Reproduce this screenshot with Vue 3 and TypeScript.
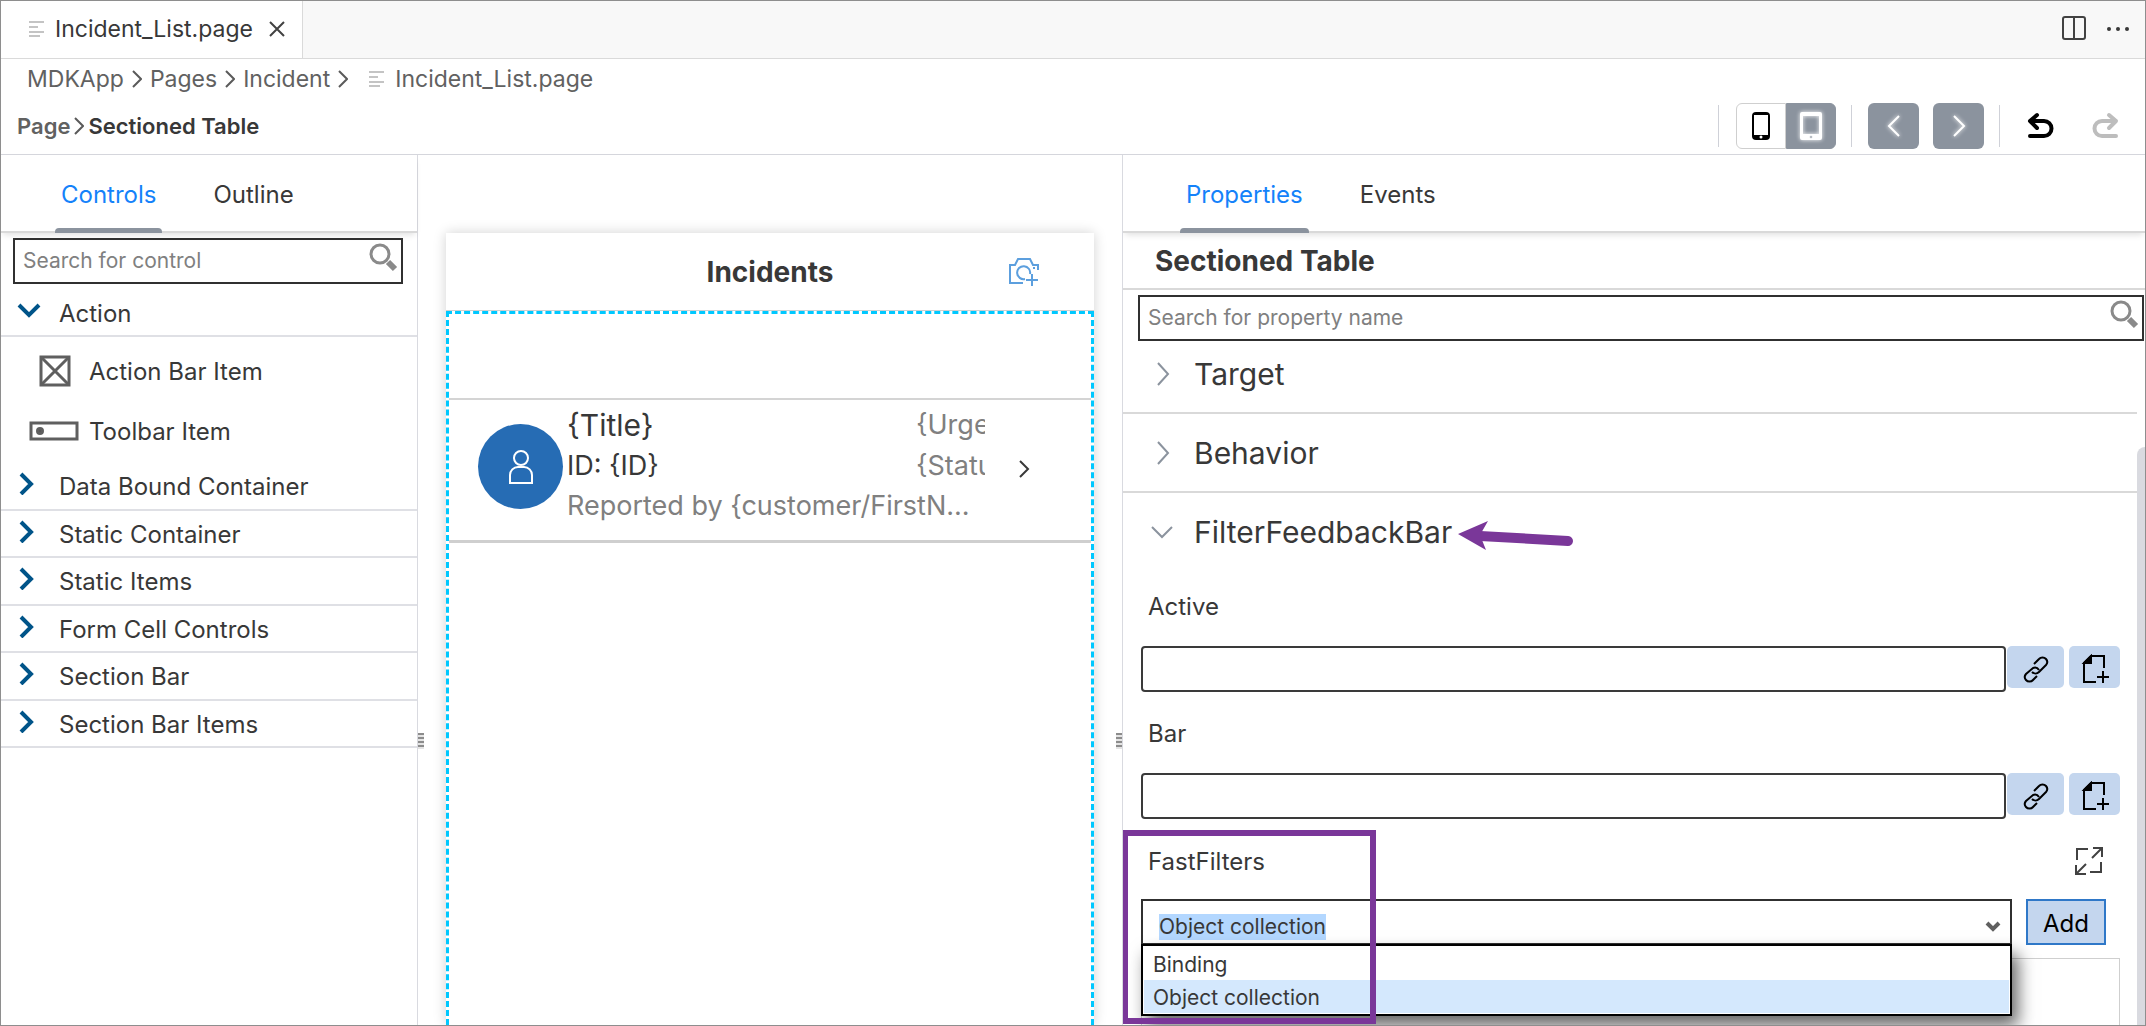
<script setup lang="ts">
import { ref } from 'vue'

interface Crumb {
  label: string
}

const crumbs: Crumb[] = [{ label: 'MDKApp' }, { label: 'Pages' }, { label: 'Incident' }]

const groups: string[] = [
  'Data Bound Container',
  'Static Container',
  'Static Items',
  'Form Cell Controls',
  'Section Bar',
  'Section Bar Items',
]

const sections: string[] = ['Target', 'Behavior']

const filterTypes: string[] = ['Binding', 'Object collection']
const filterType = ref<string>('Object collection')

const controlQuery = ref<string>('')
const propertyQuery = ref<string>('')

const bindings = ref([
  { id: 'active', label: 'Active', value: '' },
  { id: 'bar', label: 'Bar', value: '' },
])
</script>

<template>
  <div class="app">
    <header class="tabbar">
      <div class="file-tab">
        <svg class="file-icon" width="16" height="16" viewBox="0 0 16 16" aria-hidden="true">
          <path d="M0 1h15M0 6h9M0 11h15M0 15h11" />
        </svg>
        <span>Incident_List.page</span>
        <button class="plain" type="button" aria-label="Close">
          <svg width="18" height="18" viewBox="0 0 18 18" class="line dark">
            <path d="M2 2l14 14M16 2L2 16" />
          </svg>
        </button>
      </div>
      <div class="tabbar-actions">
        <button class="plain" type="button" aria-label="Split editor">
          <svg width="24" height="24" viewBox="0 0 24 24" class="line dark">
            <rect x="1" y="1" width="22" height="22" rx="2" />
            <path d="M12 1v22" />
          </svg>
        </button>
        <button class="plain" type="button" aria-label="More actions">
          <svg width="24" height="24" viewBox="0 0 24 24" class="dots">
            <circle cx="3" cy="13" r="2" />
            <circle cx="12" cy="13" r="2" />
            <circle cx="21" cy="13" r="2" />
          </svg>
        </button>
      </div>
    </header>

    <nav class="crumbs" aria-label="File path">
      <template v-for="c in crumbs" :key="c.label">
        <a href="#">{{ c.label }}</a>
        <svg class="crumb-sep" width="10" height="18" viewBox="0 0 10 18" aria-hidden="true">
          <path d="M1 1l8 8-8 8" />
        </svg>
      </template>
      <svg class="file-icon crumb-file" width="16" height="16" viewBox="0 0 16 16" aria-hidden="true">
        <path d="M0 1h15M0 6h9M0 11h15M0 15h11" />
      </svg>
      <a href="#">Incident_List.page</a>
    </nav>

    <div class="toolbar">
      <nav class="page-path" aria-label="Page path">
        <a href="#">Page</a>
        <svg class="crumb-sep" width="10" height="18" viewBox="0 0 10 18" aria-hidden="true">
          <path d="M1 1l8 8-8 8" />
        </svg>
        <strong>Sectioned Table</strong>
      </nav>
      <div class="tools">
        <i class="divider"></i>
        <div class="device">
          <button type="button" aria-label="Phone">
            <svg width="20" height="30" viewBox="0 0 20 30">
              <rect x="1" y="1" width="18" height="28" rx="4" fill="#000" />
              <rect x="3" y="4" width="14" height="20" fill="#fff" />
              <circle cx="10" cy="26" r="1.5" fill="#fff" />
            </svg>
          </button>
          <button type="button" aria-label="Tablet" class="on">
            <svg width="24" height="30" viewBox="0 0 24 30" class="glow">
              <path fill="#fff" fill-rule="evenodd" d="M3 1h18a2 2 0 0 1 2 2v24a2 2 0 0 1-2 2H3a2 2 0 0 1-2-2V3a2 2 0 0 1 2-2zM4 5v18h16V5z" />
              <circle cx="12" cy="26" r="1.3" fill="#b9bec5" />
            </svg>
          </button>
        </div>
        <i class="divider"></i>
        <button type="button" class="step" aria-label="Previous">
          <svg width="14" height="24" viewBox="0 0 14 24" class="glow"><path d="M12 2L2 12l10 10" /></svg>
        </button>
        <button type="button" class="step" aria-label="Next">
          <svg width="14" height="24" viewBox="0 0 14 24" class="glow"><path d="M2 2l10 10L2 22" /></svg>
        </button>
        <i class="divider"></i>
        <button type="button" class="plain history" aria-label="Undo">
          <svg width="28" height="28" viewBox="0 0 28 28">
            <path d="M11 3L4 9l7 7M4 9h14a7 7 0 0 1 0 15H4" />
          </svg>
        </button>
        <button type="button" class="plain history off" aria-label="Redo">
          <svg width="28" height="28" viewBox="0 0 28 28">
            <path d="M17 3l7 6-7 7M24 9H10a7 7 0 0 0 0 15h14" />
          </svg>
        </button>
      </div>
    </div>

    <main class="body">
      <aside class="left">
        <div class="tabs left-tabs" role="tablist">
          <button type="button" role="tab" class="tab active" aria-selected="true">Controls</button>
          <button type="button" role="tab" class="tab" aria-selected="false">Outline</button>
        </div>
        <div class="search">
          <input v-model="controlQuery" type="text" placeholder="Search for control" aria-label="Search for control" />
          <svg width="30" height="30" viewBox="0 0 30 30" aria-hidden="true">
            <circle cx="12" cy="12" r="9" fill="none" stroke="#8a8a8a" stroke-width="3" />
            <path d="M20 20l7 7" stroke="#8a8a8a" stroke-width="6" />
          </svg>
        </div>
        <button type="button" class="group open">
          <svg width="24" height="24" viewBox="0 0 24 24"><path d="M2 7l10 10L22 7" /></svg>
          <span>Action</span>
        </button>
        <ul class="items">
          <li>
            <span class="item-icon">
              <svg width="32" height="32" viewBox="0 0 32 32" class="shape">
                <rect x="2" y="2" width="28" height="28" />
                <path d="M3 3l26 26M29 3L3 29" />
              </svg>
            </span>
            <span>Action Bar Item</span>
          </li>
          <li>
            <span class="item-icon wide">
              <svg width="50" height="20" viewBox="0 0 50 20" class="shape">
                <rect x="2" y="2" width="46" height="16" />
                <circle cx="11" cy="10" r="2.5" fill="#555" />
              </svg>
            </span>
            <span>Toolbar Item</span>
          </li>
        </ul>
        <div class="groups">
          <button v-for="g in groups" :key="g" type="button" class="group">
            <svg width="24" height="24" viewBox="0 0 24 24"><path d="M4 3l10 10L4 23" /></svg>
            <span>{{ g }}</span>
          </button>
        </div>
        <i class="grip grip-left"></i>
      </aside>

      <section class="canvas">
        <div class="phone">
          <div class="phone-head">
            <h2>Incidents</h2>
            <button type="button" class="plain camera" aria-label="Add photo">
              <svg width="32" height="30" viewBox="0 0 32 30">
                <path d="M15 26H2V8h5l3-6h12l3 6h5v5M17 22a6.500 6.500 0 1 1 5-5M25 11h2M24 17v12M18 23h12" />
              </svg>
            </button>
          </div>
          <div class="selection">
            <div class="spacer"></div>
            <div class="record">
              <span class="avatar">
                <svg width="28" height="36" viewBox="0 0 28 36">
                  <circle cx="14" cy="9" r="7" />
                  <path d="M3 34V26a8 8 0 0 1 8-8h6a8 8 0 0 1 8 8v8z" />
                </svg>
              </span>
              <div class="record-main">
                <div class="title">{Title}</div>
                <div class="sub">ID: {ID}</div>
              </div>
              <div class="status">
                <div>{Urgency}</div>
                <div>{Status}</div>
              </div>
              <svg class="record-next" width="12" height="18" viewBox="0 0 12 18"><path d="M2 1l8 8-8 8" /></svg>
              <div class="foot">Reported by {customer/FirstN...</div>
            </div>
          </div>
        </div>
        <i class="grip grip-right"></i>
      </section>

      <aside class="right">
        <div class="tabs right-tabs" role="tablist">
          <button type="button" role="tab" class="tab active" aria-selected="true">Properties</button>
          <button type="button" role="tab" class="tab" aria-selected="false">Events</button>
        </div>
        <h1>Sectioned Table</h1>
        <div class="search">
          <input v-model="propertyQuery" type="text" placeholder="Search for property name" aria-label="Search for property name" />
          <svg width="30" height="30" viewBox="0 0 30 30" aria-hidden="true">
            <circle cx="12" cy="12" r="9" fill="none" stroke="#8a8a8a" stroke-width="3" />
            <path d="M20 20l7 7" stroke="#8a8a8a" stroke-width="6" />
          </svg>
        </div>

        <div class="scroll">
          <div class="props">
            <button v-for="s in sections" :key="s" type="button" class="section">
              <svg width="24" height="24" viewBox="0 0 24 24"><path d="M8 1l10 11L8 23" /></svg>
              <span>{{ s }}</span>
            </button>
            <button type="button" class="section expanded">
              <svg width="24" height="24" viewBox="0 0 24 24"><path d="M2 7l10 10L22 7" /></svg>
              <span>FilterFeedbackBar</span>
              <svg class="arrow" width="118" height="34" viewBox="0 0 118 34" aria-hidden="true">
                <path d="M22 17L110 22" stroke="#7a3799" stroke-width="10" stroke-linecap="round" />
                <path d="M0 15L30 2l-8 14 6 15z" fill="#7a3799" />
              </svg>
            </button>

            <div v-for="b in bindings" :key="b.id" class="field">
              <label :for="b.id">{{ b.label }}</label>
              <div class="field-row">
                <input :id="b.id" v-model="b.value" type="text" />
                <button type="button" class="chip link" :aria-label="'Link ' + b.label">
                  <svg width="28" height="28" viewBox="0 0 28 28">
                    <path d="M12 9l5-5a4.600 4.600 0 0 1 7 0a4.600 4.600 0 0 1 0 6l-7 7a5 5 0 0 1-7 0M15 21l-4 4a4.600 4.600 0 0 1-7 0a4.600 4.600 0 0 1 0-6l7-6a5 5 0 0 1 6 2" />
                  </svg>
                </button>
                <button type="button" class="chip" :aria-label="'Create rule for ' + b.label">
                  <svg width="30" height="30" viewBox="0 0 30 30">
                    <path d="M16 28H4V9l7-7h13v12M23 17v12M17 23h12" />
                    <path d="M4 9l7-7v7z" fill="#000" />
                  </svg>
                </button>
              </div>
            </div>

            <div class="field fast">
              <div class="fast-head">
                <label for="fast">FastFilters</label>
                <button type="button" class="plain expand" aria-label="Expand">
                  <svg width="30" height="30" viewBox="0 0 30 30" class="line dark">
                    <path d="M3 14V3h11M27 16v10H16M19 2h9v9M28 2L18 12M2 19v9h10M2 28l10-10" />
                  </svg>
                </button>
              </div>
              <div class="fast-row">
                <div class="combo">
                  <select id="fast" v-model="filterType">
                    <option v-for="t in filterTypes" :key="t">{{ t }}</option>
                  </select>
                  <svg width="16" height="12" viewBox="0 0 16 12"><path d="M2 2l6 6 6-6" /></svg>
                  <ul class="menu" role="listbox" aria-label="FastFilters">
                    <li
                      v-for="t in filterTypes"
                      :key="t"
                      role="option"
                      :aria-selected="t === filterType"
                      :class="{ picked: t === filterType }"
                    >
                      {{ t }}
                    </li>
                  </ul>
                </div>
                <button type="button" class="add">Add</button>
              </div>
              <div class="collection"></div>
              <i class="mark"></i>
            </div>
          </div>
          <i class="thumb"></i>
        </div>
      </aside>
    </main>
  </div>
</template>

<style>
body {
  margin: 0;
  background: #fff;
}
</style>

<style scoped>
* {
  box-sizing: border-box;
}

.app {
  height: 100vh;
  display: flex;
  flex-direction: column;
  border: 1px solid #8e8e8e;
  overflow: hidden;
  background: #fff;
  color: #383838;
  font-family: Inter, "Liberation Sans", sans-serif;
  font-size: 24px;
}

button,
input,
select {
  font: inherit;
  color: inherit;
}

button {
  margin: 0;
  cursor: pointer;
}

a {
  color: inherit;
  text-decoration: none;
}

svg {
  display: block;
  flex: none;
  fill: none;
}

ul {
  list-style: none;
  margin: 0;
  padding: 0;
}

.plain {
  display: flex;
  padding: 0;
  border: 0;
  background: none;
}

.line {
  stroke-width: 2;
}

.dark {
  stroke: #424242;
}

/* File tab strip */
.tabbar {
  flex: none;
  display: flex;
  justify-content: space-between;
  height: 58px;
  background: #f8f8f8;
  border-bottom: 1px solid #dadada;
}

.file-tab {
  display: flex;
  align-items: center;
  height: 57px;
  padding: 0 16px 2px 28px;
  background: #fff;
  border-right: 1px solid #dadada;
  font-size: 23px;
}

.file-tab span {
  margin: 0 15px 0 10px;
}

.file-icon {
  stroke: #c4c4c4;
  stroke-width: 2;
}

.tabbar-actions {
  display: flex;
  align-items: center;
  gap: 20px;
  padding: 0 15px 4px 0;
}

.dots {
  fill: #383838;
}

/* Paths */
.crumbs {
  flex: none;
  display: flex;
  align-items: center;
  height: 40px;
  padding-left: 26px;
  font-size: 23px;
  color: #616161;
}

.crumb-sep {
  margin: 0 8px;
  stroke: #5a5a5a;
  stroke-width: 2;
}

.crumb-file {
  margin: 0 10px 0 13px;
}

.toolbar {
  flex: none;
  display: flex;
  justify-content: space-between;
  align-items: center;
  height: 56px;
  padding: 0 25px 1px 16px;
  border-bottom: 1px solid #d5d6dc;
}

.page-path {
  display: flex;
  align-items: center;
  font-size: 22px;
  font-weight: 600;
}

.page-path a {
  color: #616161;
}

.page-path strong {
  font-weight: 600;
}

.page-path .crumb-sep {
  margin: 0 4px;
}

.tools {
  display: flex;
  align-items: center;
}

.divider {
  width: 1px;
  height: 42px;
  background: #cfd1d8;
}

.device {
  display: flex;
  margin: 0 15px 0 17px;
}

.device button {
  display: flex;
  align-items: center;
  justify-content: center;
  width: 50px;
  height: 46px;
  padding: 0;
  border: 1px solid #cfcfcf;
  border-radius: 6px 0 0 6px;
  background: #fff;
}

.device .on {
  border-color: #8b939e;
  border-radius: 0 6px 6px 0;
  background: #8b939e;
}

.glow {
  filter: drop-shadow(0 0 2px #fff);
}

.step {
  display: flex;
  align-items: center;
  justify-content: center;
  width: 51px;
  height: 46px;
  padding: 0;
  margin-left: 14px;
  border: 0;
  border-radius: 6px;
  background: #8b939e;
}

.divider + .step {
  margin-left: 16px;
}

.step + .divider {
  margin-left: 15px;
}

.step svg {
  stroke: #fff;
  stroke-width: 2;
}

.history {
  margin-left: 26px;
  stroke: #000;
  stroke-width: 4;
  stroke-linecap: round;
  stroke-linejoin: round;
}

.history + .history {
  margin-left: 38px;
}

.off {
  stroke: #bdbdbd;
}

/* Three-column body */
.body {
  flex: 1;
  min-height: 0;
  display: grid;
  grid-template-columns: minmax(0, 417fr) minmax(0, 704fr) minmax(0, 1023fr);
}

.left,
.canvas,
.right {
  position: relative;
  display: flex;
  flex-direction: column;
  min-height: 0;
}

.left {
  z-index: 1;
  border-right: 1px solid #d9dae0;
}

.right {
  border-left: 1px solid #d9dae0;
  overflow: hidden;
}

.tabs {
  flex: none;
  display: flex;
  height: 78px;
  border-bottom: 2px solid #d9d9d9;
  box-shadow: 0 4px 6px -2px rgba(0, 0, 0, 0.12);
}

.left-tabs {
  padding-left: 54px;
  gap: 45px;
}

.right-tabs {
  padding-left: 57px;
  gap: 45px;
}

.tab {
  position: relative;
  padding: 2px 6px 0;
  border: 0;
  background: none;
}

.active {
  color: #1482fa;
}

.active::after {
  content: "";
  position: absolute;
  left: 0;
  right: 0;
  bottom: -2px;
  height: 5px;
  border-radius: 4px 4px 0 0;
  background: #8b939e;
}

.search {
  flex: none;
  display: flex;
  height: 46px;
  padding: 2px 3px 0 8px;
  border: 2px solid #303030;
  font-size: 21px;
}

.left .search {
  margin: 5px 14px 0 12px;
}

.right .search {
  margin: 5px 1px 0 15px;
}

.search input {
  flex: 1;
  min-width: 0;
  height: 36px;
  padding: 0;
  border: 0;
  outline: 0;
  background: none;
}

.search input::placeholder {
  color: #808080;
  opacity: 1;
}

.group {
  display: flex;
  align-items: center;
  width: 100%;
  padding: 2px 0 0 16px;
  border: 0;
  border-bottom: 2px solid #dfe0e5;
  background: none;
  text-align: left;
}

.group svg {
  margin: 0 18px 7px 0;
  stroke: #005489;
  stroke-width: 4;
}

.open {
  flex: none;
  height: 53px;
  padding-top: 7px;
}

.items li {
  display: flex;
  align-items: center;
  height: 61px;
  padding: 7px 0 0 28px;
}

.items li + li {
  height: 65px;
  padding-top: 1px;
}

.item-icon {
  width: 60px;
  padding-left: 10px;
}

.wide {
  padding-left: 0;
}

.shape {
  stroke: #5f5f5f;
  stroke-width: 3;
}

.groups {
  display: flex;
  flex-direction: column;
  height: 285px;
}

.groups .group {
  flex: 1;
}

.grip {
  position: absolute;
  top: 578px;
  width: 6px;
  height: 16px;
  background: repeating-linear-gradient(#8c8c8c 0 2px, #e4e4e4 2px 4px);
}

.grip-left {
  right: -7px;
}

.grip-right {
  right: 0;
}

/* Phone preview */
.canvas {
  overflow: hidden;
  padding: 78px 28px 0 28px;
}

.phone {
  flex: 1;
  display: flex;
  flex-direction: column;
  box-shadow: 0 0 12px rgba(0, 0, 0, 0.18);
}

.phone-head {
  position: relative;
  display: flex;
  align-items: center;
  justify-content: center;
  height: 78px;
  border-bottom: 1px solid #cfcfcf;
}

h2 {
  margin: 0;
  font-size: 28px;
  font-weight: 700;
}

.camera {
  position: absolute;
  right: 54px;
  stroke: #5c9fde;
  stroke-width: 2;
}

.selection {
  flex: 1;
  border: 3px dashed #00c8ff;
  border-bottom: 0;
}

.spacer {
  height: 86px;
  border-bottom: 2px solid #d4d4d4;
}

.record {
  display: grid;
  grid-template-columns: 89px 1fr 69px 34px 72px;
  grid-template-rows: 89px 50px;
  height: 143px;
  padding-left: 29px;
  border-bottom: 3px solid #cfcfcf;
  font-size: 27px;
}

.avatar {
  grid-row: 1 / 3;
  align-self: center;
  display: flex;
  align-items: center;
  justify-content: center;
  width: 85px;
  height: 85px;
  margin-top: -6px;
  border-radius: 50%;
  background: #266cb4;
}

.avatar svg {
  stroke: #fff;
  stroke-width: 2;
}

.record-main,
.status {
  padding-top: 5px;
}

.record-main div,
.status div {
  height: 41px;
  line-height: 40px;
}

.record-main .title {
  font-size: 30px;
}

.status {
  overflow: hidden;
  color: #808080;
}

.record-next {
  align-self: end;
  margin: 0 0 11px 33px;
  stroke: #383838;
  stroke-width: 2;
}

.foot {
  grid-column: 2 / 6;
  color: #808080;
  line-height: 33px;
}

/* Property editor */
h1 {
  flex: none;
  margin: 0;
  height: 57px;
  padding-left: 32px;
  border-bottom: 2px solid #d9d9d9;
  font-size: 28px;
  font-weight: 700;
  line-height: 56px;
}

.scroll {
  flex: 1;
  min-height: 0;
  display: flex;
}

.props {
  flex: 1;
  min-width: 0;
}

.thumb {
  width: 8px;
  margin-top: 106px;
  border-radius: 8px 0 0 0;
  background: #d9dae0;
}

.section {
  display: flex;
  align-items: center;
  width: 100%;
  height: 79px;
  padding: 0 0 0 27px;
  border: 0;
  border-bottom: 2px solid #d9d9d9;
  background: none;
  font-size: 30px;
  text-align: left;
}

.section:first-child {
  height: 73px;
  padding-bottom: 5px;
}

.section > svg:first-child {
  margin-right: 20px;
  stroke: #8b939e;
  stroke-width: 2;
}

.expanded {
  height: 72px;
  padding-top: 6px;
  border-bottom: 0;
}

.arrow {
  margin: 8px 0 0 6px;
}

.field {
  padding: 0 17px 0 18px;
}

.field > label,
.fast-head {
  display: flex;
  align-items: center;
  height: 81px;
  padding: 2px 0 0 7px;
}

.field-row {
  display: flex;
}

.field-row input {
  flex: 1;
  min-width: 0;
  height: 46px;
  padding: 0 8px;
  border: 2px solid #3a3a3a;
  border-radius: 4px;
  background: #fff;
}

.chip {
  display: flex;
  align-items: center;
  justify-content: center;
  width: 51px;
  height: 42px;
  padding: 3px 0 0;
  border: 0;
  border-radius: 5px;
  background: #c4d6ee;
}

.chip svg {
  stroke: #000;
  stroke-width: 2;
}

.link {
  width: 57px;
  margin: 0 5px 0 1px;
}

.fast {
  position: relative;
}

.fast-head {
  justify-content: space-between;
  height: 80px;
  padding: 4px 16px 0 7px;
}

.fast-row {
  display: flex;
  align-items: center;
  gap: 14px;
  padding-right: 14px;
}

.combo {
  position: relative;
  flex: 1;
  display: flex;
  align-items: center;
  justify-content: space-between;
  height: 46px;
  padding: 9px 9px 0 16px;
  border: 2px solid #303030;
  font-size: 21px;
}

.combo select {
  height: 26px;
  padding: 0;
  border: 0;
  border-radius: 0;
  appearance: none;
  background: #b3d7ff;
  line-height: 26px;
}

.combo > svg {
  stroke: #606060;
  stroke-width: 4;
}

.menu {
  position: absolute;
  z-index: 1;
  top: 43px;
  left: -2px;
  right: -2px;
  padding: 1px;
  border: 2px solid #000;
  background: #fff;
  box-shadow: 6px 10px 16px rgba(0, 0, 0, 0.6);
}

.menu li {
  height: 33px;
  padding-left: 9px;
  line-height: 35px;
}

.picked {
  background: #d4e8fd;
}

.add {
  width: 80px;
  height: 46px;
  padding: 2px 0 0;
  border: 2px solid #2f78c8;
  background: #c4d6ee;
  color: #000;
}

.collection {
  height: 120px;
  margin-top: 13px;
  border: 1px solid #cfcfcf;
}

/* Highlight frame around the FastFilters picker */
.mark {
  position: absolute;
  z-index: 2;
  top: 11px;
  left: -1px;
  width: 254px;
  height: 194px;
  border: 6px solid #7a3799;
}
</style>
